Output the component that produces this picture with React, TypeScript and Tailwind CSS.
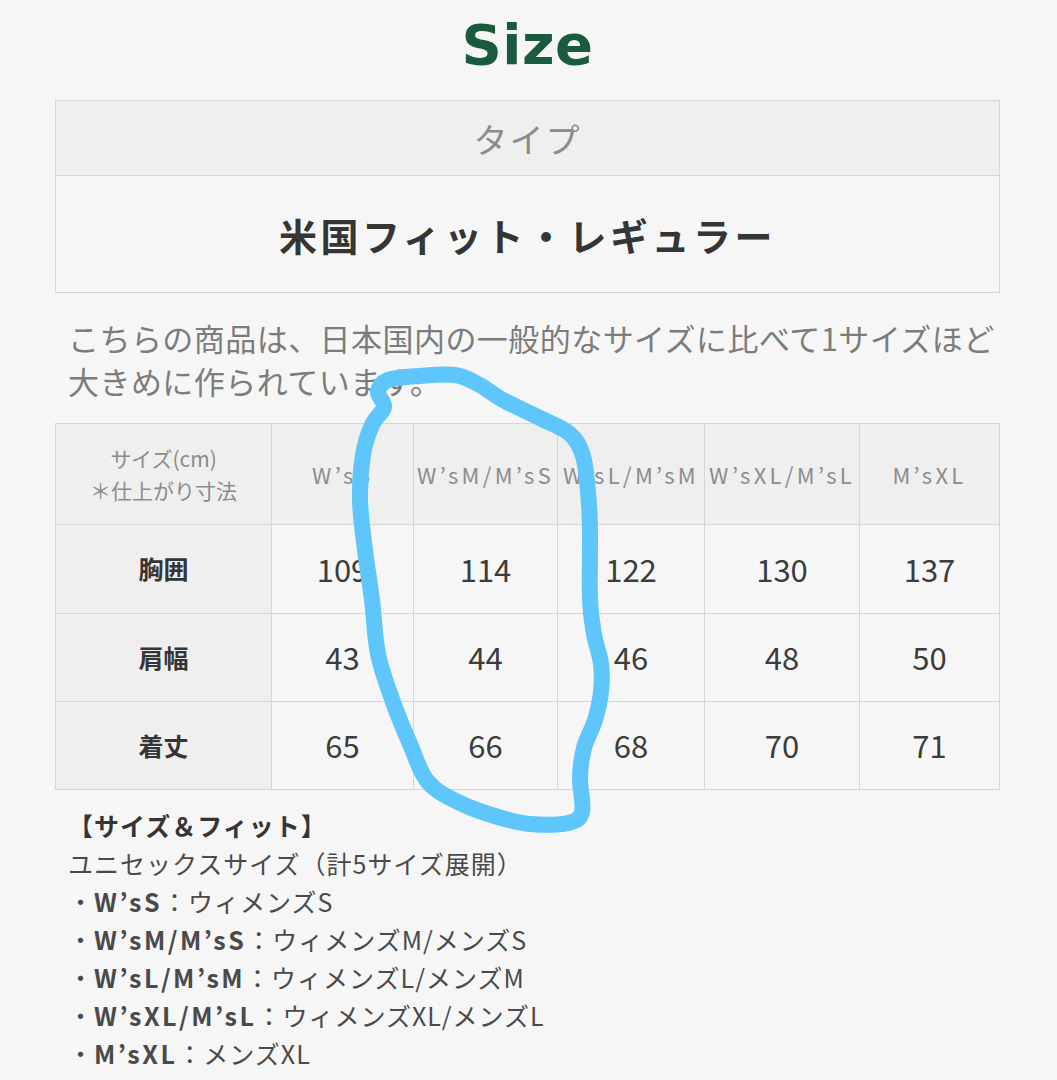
import React from "react";

const headers = ["W’sS", "W’sM/M’sS", "W’sL/M’sM", "W’sXL/M’sL", "M’sXL"];

const rows = [
  { label: "胸囲", values: [109, 114, 122, 130, 137], h: "h-[89px]" },
  { label: "肩幅", values: [43, 44, 46, 48, 50], h: "h-[88px]" },
  { label: "着丈", values: [65, 66, 68, 70, 71], h: "h-[88px]" },
];

const sizes = [
  { code: "W’sS", name: "ウィメンズS" },
  { code: "W’sM/M’sS", name: "ウィメンズM/メンズS" },
  { code: "W’sL/M’sM", name: "ウィメンズL/メンズM" },
  { code: "W’sXL/M’sL", name: "ウィメンズXL/メンズL" },
  { code: "M’sXL", name: "メンズXL" },
];

// points of the hand-drawn loop, traced from the screenshot
const LOOP: [number, number][] = [
  [384, 407], [378, 392], [388, 380], [420, 376], [455, 375], [478, 384],
  [503, 400], [540, 418], [570, 434], [583, 456], [588, 492], [590, 530],
  [590, 600], [594, 634], [601, 664], [601, 692], [595, 720], [584, 748],
  [580, 778], [582, 812], [568, 823], [530, 824], [498, 817], [460, 803],
  [428, 782], [410, 744], [393, 702], [378, 654], [372, 600], [365, 550],
  [360, 500], [363, 455], [372, 425],
];

function smoothPath(pts: [number, number][]) {
  const n = pts.length;
  let d = `M${pts[0][0]},${pts[0][1]}`;
  for (let i = 0; i < n; i++) {
    const p0 = pts[(i - 1 + n) % n];
    const p1 = pts[i];
    const p2 = pts[(i + 1) % n];
    const p3 = pts[(i + 2) % n];
    const c1x = p1[0] + (p2[0] - p0[0]) / 6;
    const c1y = p1[1] + (p2[1] - p0[1]) / 6;
    const c2x = p2[0] - (p3[0] - p1[0]) / 6;
    const c2y = p2[1] - (p3[1] - p1[1]) / 6;
    d += ` C${c1x.toFixed(1)},${c1y.toFixed(1)} ${c2x.toFixed(1)},${c2y.toFixed(1)} ${p2[0]},${p2[1]}`;
  }
  return d;
}

export default function App() {
  return (
    <div className="relative min-h-[1080px] w-full overflow-hidden bg-[#f6f6f6] font-['Noto_Sans_CJK_JP',sans-serif]">
      <div className="pl-[55px] pr-[57px]">
        {/* title */}
        <h1 className="flex h-[100px] items-center justify-center pb-[10px] font-['DejaVu_Sans',sans-serif] text-[56px] font-bold tracking-[0.5px] text-[#1a5a3e]">
          Size
        </h1>

        {/* type box */}
        <div className="border border-[#d6d6d6]">
          <div className="flex h-[75px] items-center justify-center border-b border-[#d6d6d6] bg-[#efefef] text-[34px] tracking-[2px] text-[#8c8c8c]">
            タイプ
          </div>
          <div className="flex h-[116px] items-center justify-center text-[38px] font-bold tracking-[3.5px] text-[#353535]">
            米国フィット・レギュラー
          </div>
        </div>

        <p className="mt-[23px] whitespace-nowrap px-[13px] text-[31px] leading-[43px] tracking-[0.45px] text-[#7c7c7c]">
          こちらの商品は、日本国内の一般的なサイズに比べて1サイズほど
          <br />
          大きめに作られています。
        </p>

        {/* size table */}
        <table className="mt-[21px] w-full table-fixed border-collapse border border-[#d6d6d6]">
          <colgroup>
            <col className="w-[216px]" />
            <col className="w-[142px]" />
            <col className="w-[144px]" />
            <col className="w-[147px]" />
            <col className="w-[155px]" />
            <col className="w-[140px]" />
          </colgroup>
          <thead>
            <tr className="h-[101px] bg-[#efefef]">
              <th className="border border-[#d6d6d6] text-[21px] font-normal leading-[32px] text-[#8c8c8c]">
                サイズ(cm)
                <br />
                ＊仕上がり寸法
              </th>
              {headers.map((h) => (
                <th
                  key={h}
                  className="whitespace-nowrap border border-[#d6d6d6] text-[22px] font-normal tracking-[3.3px] text-[#8c8c8c]"
                >
                  {h}
                </th>
              ))}
            </tr>
          </thead>
          <tbody>
            {rows.map((r) => (
              <tr key={r.label} className={r.h}>
                <td className="border border-[#d6d6d6] bg-[#efefef] text-center text-[25px] font-bold text-[#353535]">
                  {r.label}
                </td>
                {r.values.map((v, i) => (
                  <td key={i} className="border border-[#d6d6d6] text-center text-[31px] text-[#3c3c3c]">
                    {v}
                  </td>
                ))}
              </tr>
            ))}
          </tbody>
        </table>

        {/* size & fit notes */}
        <div className="mt-[16px] px-[13px] text-[25px] leading-[38px] tracking-[1px] text-[#4a4a4a]">
          <div className="font-bold text-[#353535]">【サイズ＆フィット】</div>
          <div>ユニセックスサイズ（計5サイズ展開）</div>
          {sizes.map((s) => (
            <div key={s.code} className="whitespace-nowrap">
              ・<span className="font-bold tracking-[2.5px]">{s.code}</span>：{s.name}
            </div>
          ))}
        </div>
      </div>

      {/* hand-drawn highlight */}
      <svg
        className="pointer-events-none absolute left-0 top-0 h-[1080px] w-[1057px]"
        viewBox="0 0 1057 1080"
        fill="none"
      >
        <path d={smoothPath(LOOP)} stroke="#5ec6fa" strokeWidth={16} strokeLinejoin="round" strokeLinecap="round" />
      </svg>
    </div>
  );
}
